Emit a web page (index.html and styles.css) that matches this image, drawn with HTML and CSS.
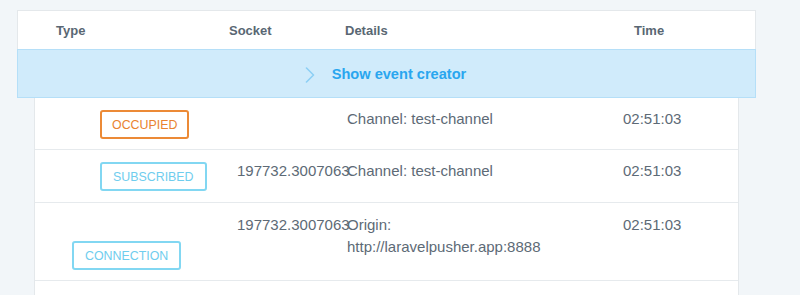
FILE: index.html
```html
<!DOCTYPE html>
<html lang="en">
<head>
    <meta charset="UTF-8">
    <meta name="viewport" content="width=device-width, initial-scale=1.0">
    <title>Events</title>
    <link rel="stylesheet" href="styles.css">
</head>
<body>
    <div class="events">
        <div class="events-head">
            <div class="head-cell head-type">Type</div>
            <div class="head-cell">Socket</div>
            <div class="head-cell">Details</div>
            <div class="head-cell">Time</div>
        </div>

        <div class="creator-toggle">
            <svg class="chevron" width="10" height="16" viewBox="0 0 10 16">
                <polyline points="1.5,1 8.5,8 1.5,15" fill="none" stroke="#8dcff5" stroke-width="1.6" stroke-linecap="round" stroke-linejoin="round"/>
            </svg>
            <span>Show event creator</span>
        </div>

        <div class="events-body">
            <div class="event-row">
                <div class="type-cell"><span class="badge badge-occupied">Occupied</span></div>
                <div class="cell"></div>
                <div class="cell">Channel: test-channel</div>
                <div class="cell">02:51:03</div>
            </div>
            <div class="event-row row-sub">
                <div class="type-cell"><span class="badge badge-subscribed">Subscribed</span></div>
                <div class="cell socket">197732.3007063</div>
                <div class="cell">Channel: test-channel</div>
                <div class="cell">02:51:03</div>
            </div>
            <div class="event-row row-tall">
                <div class="type-cell"><span class="badge badge-connection">Connection</span></div>
                <div class="cell socket">197732.3007063</div>
                <div class="cell">Origin:<br>http://laravelpusher.app:8888</div>
                <div class="cell">02:51:03</div>
            </div>
            <div class="event-row row-empty"></div>
        </div>
    </div>
</body>
</html>
```

FILE: styles.css
```css
body {
  margin: 0;
  background: #f2f6f9;
  font-family: "Liberation Sans", Arial, sans-serif;
  color: #5d6a76;
}

.events {
  padding: 10px 44px 0 17px;
}

.events-head {
  display: grid;
  grid-template-columns: 211px 116px 289px 1fr;
  height: 38px;
  align-items: center;
  background: #fff;
  border: 1px solid #e4e8eb;
  border-bottom: none;
  font-size: 13px;
  font-weight: bold;
  color: #596773;
}

.head-type {
  padding-left: 38px;
}

.creator-toggle {
  display: flex;
  align-items: center;
  justify-content: center;
  gap: 17px;
  height: 47px;
  padding-right: 2px;
  background: #d0ebfb;
  border: 1px solid #b5dff8;
  color: #2aa6ef;
  font-size: 14.6px;
  font-weight: bold;
}

.chevron {
  margin-top: 2px;
}

.events-body {
  margin: 0 17px;
  background: #fff;
  border-left: 1px solid #e4e8eb;
  border-right: 1px solid #e4e8eb;
}

.event-row {
  display: grid;
  grid-template-columns: 202px 110px 276px 1fr;
  border-bottom: 1px solid #e6eaed;
  font-size: 15px;
  line-height: 22px;
}

.cell {
  padding-top: 10px;
  white-space: nowrap;
}

.type-cell {
  padding: 12px 0 10px 65px;
}

.row-sub .type-cell {
  padding-bottom: 11px;
}

.row-tall .type-cell {
  padding: 38px 0 10px 37px;
}

.row-tall .cell {
  padding-top: 11px;
}

.row-empty {
  height: 40px;
}

.badge {
  display: inline-block;
  height: 25px;
  line-height: 26px;
  padding: 0 10px;
  border: 2px solid;
  border-radius: 3px;
  font-size: 12.4px;
  text-transform: uppercase;
  vertical-align: top;
}

.badge-occupied {
  color: #e9832f;
  border-color: #ec8a36;
}

.badge-subscribed,
.badge-connection {
  color: #6fcdee;
  border-color: #82d7f2;
  padding: 0 11px;
}
```
